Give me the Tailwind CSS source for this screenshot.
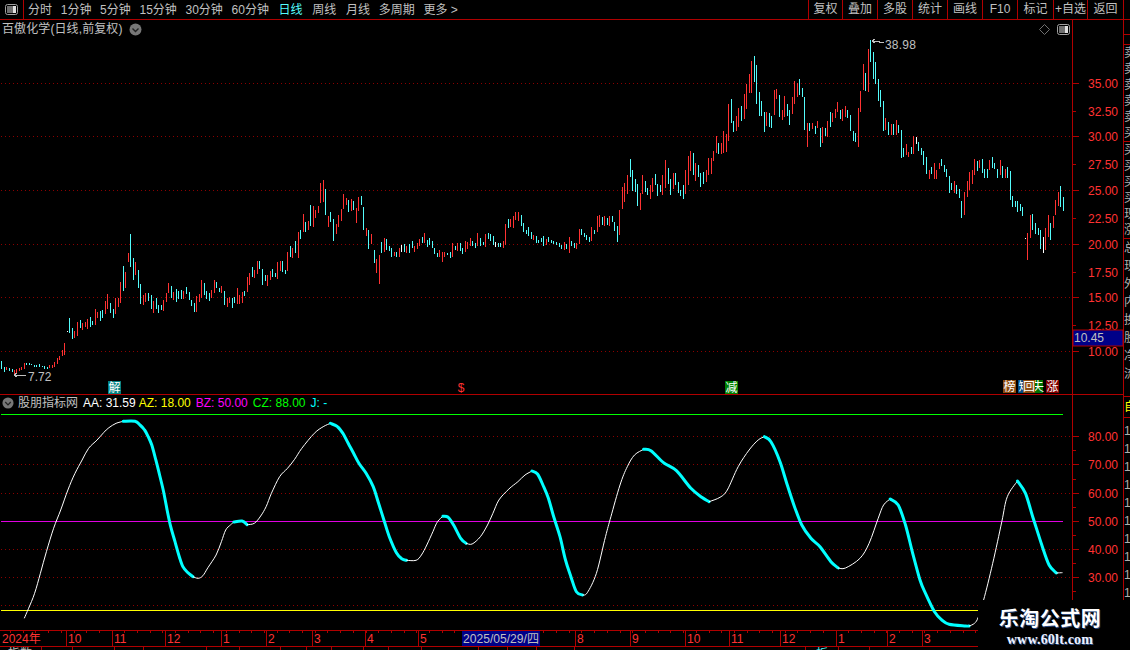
<!DOCTYPE html>
<html lang="zh">
<head>
    <meta charset="UTF-8">
    <title>百傲化学</title>
    <script src="https://cdn.jsdelivr.net/npm/@tailwindcss/browser@4"></script>
</head>
<body class="bg-black">
<div class="w-[1130px] h-[650px] relative overflow-hidden bg-black text-[#c0c0c0] text-[12px] leading-[14px] font-['Liberation_Sans','Noto_Sans_CJK_SC',sans-serif] flex flex-col">

    <!-- Top toolbar -->
    <header class="h-[20px] flex border-b border-[#b00000]">
        <div class="w-[24px] border-r border-[#b00000] flex items-center justify-center">
            <svg width="13" height="11" viewBox="0 0 13 11"><rect x="0.5" y="0.5" width="12" height="10" rx="2" fill="none" stroke="#a0a0a0"/><rect x="2" y="2" width="6" height="7" fill="#707070"/><rect x="8" y="2" width="3" height="7" fill="#e0e0e0"/></svg>
        </div>
        <nav class="flex-1 flex items-center gap-[8.7px] pl-[4px]">
            <span>分时</span><span>1分钟</span><span>5分钟</span><span>15分钟</span><span>30分钟</span><span>60分钟</span>
            <span class="text-[#54fcfc] ml-[1px]">日线</span><span class="ml-[1px]">周线</span><span class="ml-[1px]">月线</span><span>多周期</span><span>更多 &gt;</span>
        </nav>
        <div class="flex items-center text-center">
            <span class="w-[34px] h-[19px] leading-[19px] border-l border-[#b00000]">复权</span>
            <span class="w-[35px] h-[19px] leading-[19px] border-l border-[#b00000]">叠加</span>
            <span class="w-[35px] h-[19px] leading-[19px] border-l border-[#b00000]">多股</span>
            <span class="w-[35px] h-[19px] leading-[19px] border-l border-[#b00000]">统计</span>
            <span class="w-[35px] h-[19px] leading-[19px] border-l border-[#b00000]">画线</span>
            <span class="w-[35px] h-[19px] leading-[19px] border-l border-[#b00000]">F10</span>
            <span class="w-[36px] h-[19px] leading-[19px] border-l border-[#b00000]">标记</span>
            <span class="w-[34px] h-[19px] leading-[19px] border-l border-[#b00000] whitespace-nowrap">+自选</span>
            <span class="w-[37px] h-[19px] leading-[19px] border-x border-[#b00000]">返回</span>
            <span class="w-[6px]"></span>
        </div>
    </header>

    <div class="flex h-[627px]">
        <div class="w-[1123px] flex flex-col">
            <!-- Price panel -->
            <section class="h-[375px] flex border-b border-[#b00000]">
                <div class="w-[1073px] border-r border-[#b00000] flex flex-col">
                    <div class="h-[18px] flex items-center justify-between pl-[2px] pr-[2px]">
                        <div class="flex items-center gap-[6px]">
                            <span class="tracking-[0.1px]">百傲化学(日线,前复权)</span>
                            <svg width="13" height="13" viewBox="0 0 13 13"><circle cx="6.5" cy="6.5" r="6" fill="#777"/><path d="M3.5 5.5 L6.5 8.5 L9.5 5.5" fill="none" stroke="#222" stroke-width="1.4"/></svg>
                        </div>
                        <div class="flex items-center gap-[7px]">
                            <svg width="11" height="11" viewBox="0 0 11 11"><path d="M5.5 0.5 L10.5 5.5 L5.5 10.5 L0.5 5.5 Z" fill="none" stroke="#707070"/></svg>
                            <svg width="13" height="11" viewBox="0 0 13 11"><rect x="0.5" y="0.5" width="12" height="10" rx="2" fill="none" stroke="#a0a0a0"/><rect x="2" y="2" width="6" height="7" fill="#707070"/><rect x="8" y="2" width="3" height="7" fill="#e0e0e0"/></svg>
                        </div>
                    </div>
                    <svg id="price" class="block" width="1072" height="356" viewBox="0 38 1072 356" shape-rendering="crispEdges"></svg>
                </div>
                <svg id="priceAxis" class="block" width="50" height="374" viewBox="1073 20 50 374"></svg>
            </section>

            <!-- Indicator panel -->
            <section class="h-[235px] flex">
                <div class="w-[1073px] border-r border-[#b00000] flex flex-col">
                    <div class="h-[14px] flex items-center pl-[2px] mt-[1px] whitespace-nowrap">
                        <svg class="mr-[4px]" width="12" height="12" viewBox="0 0 13 13"><circle cx="6.5" cy="6.5" r="6" fill="#777"/><path d="M3.5 5.5 L6.5 8.5 L9.5 5.5" fill="none" stroke="#222" stroke-width="1.4"/></svg>
                        <span class="mr-[5px]">股朋指标网</span>
                        <span class="text-white mr-[3px]">AA: 31.59</span>
                        <span class="text-[#ffff00] mr-[5px]">AZ: 18.00</span>
                        <span class="text-[#ff00ff] mr-[5px]">BZ: 50.00</span>
                        <span class="text-[#00ff00] mr-[5px]">CZ: 88.00</span>
                        <span class="text-[#00ffff]">J: -</span>
                    </div>
                    <svg id="ind" class="block" width="1072" height="220" viewBox="0 410 1072 220"></svg>
                </div>
                <svg id="indAxis" class="block" width="50" height="235" viewBox="1073 395 50 235"></svg>
            </section>

            <!-- Date axis -->
            <div class="h-[17px] border-y border-[#b00000]">
                <svg id="dates" class="block" width="1123" height="15" viewBox="0 631 1123 15" shape-rendering="crispEdges"></svg>
            </div>
        </div>

        <!-- Clipped quote column on the right -->
        <aside class="w-[7px] border-l border-[#b00000] overflow-hidden flex flex-col text-[#b0b0b0] whitespace-nowrap">
            <div class="h-[15px] border-b border-[#b00000]"></div>
            <div class="h-[10px] border-b border-[#b00000]"></div>
            <div class="h-[97px] border-b border-[#b00000] overflow-hidden leading-[16px]">卖五<br>卖四<br>卖三<br>卖二<br>卖一<br>买一</div>
            <div class="h-[97px] border-b border-[#b00000] overflow-hidden leading-[16px]">买二<br>买三<br>买四<br>买五<br>现价<br>涨跌</div>
            <div class="h-[158px] border-b border-[#b00000] overflow-hidden leading-[18px]">总量<br>现量<br>外盘<br>内盘<br>换手<br>股本<br>净资<br>流通</div>
            <div class="h-[21px] border-b border-[#b00000] text-[#ffff00] leading-[21px]">自选</div>
            <div class="flex-1 overflow-hidden pt-[4px] leading-[18px]">1<br>1<br>1<br>1<br>1<br>1<br>1<br>1<br>1<br>1<br>1<br>1</div>
        </aside>
    </div>

    <!-- Bottom status tabs, only their top shows -->
    <footer class="h-[3px] flex overflow-hidden leading-[14px]">
        <span class="w-[42px] border-r border-[#b00000] pl-[8px]">指数</span>
        <span class="w-[31px] border-r border-[#b00000]"></span>
        <span class="w-[42px] border-r border-[#b00000]"></span>
        <span class="w-[29px] border-r border-[#b00000]"></span>
        <span class="w-[63px] border-r border-[#b00000]"></span>
        <span class="w-[33px] border-r border-[#b00000]"></span>
        <span class="w-[41px] border-r border-[#b00000]"></span>
        <span class="w-[26px] border-r border-[#b00000]"></span>
        <span class="w-[25px] border-r border-[#b00000]"></span>
        <span class="w-[32px] border-r border-[#b00000]"></span>
        <span class="w-[25px] border-r border-[#b00000]"></span>
        <span class="w-[33px] border-r border-[#b00000]"></span>
        <span class="w-[57px] border-r border-[#b00000]"></span>
        <span class="w-[29px] border-r border-[#b00000]"></span>
        <span class="w-[29px] border-r border-[#b00000]"></span>
        <span class="w-[38px] border-r border-[#b00000]"></span>
        <span class="w-[231px] border-r border-[#b00000]"></span>
        <span class="w-[33px] border-r border-[#b00000] text-[#54fcfc] pl-[10px]">板块</span>
        <span class="w-[31px] border-r border-[#b00000]"></span>
    </footer>

    <!-- Watermark over the lower right corner -->
    <div class="absolute left-[978px] top-[600px] w-[152px] h-[50px] bg-black flex flex-col items-center pr-[8px]">
        <div class="text-[20px] leading-[24px] mt-[7px] font-bold text-white tracking-[0.5px] whitespace-nowrap [text-shadow:1px_1px_0_#2a4a80]">乐淘公式网</div>
        <div class="text-[14px] leading-[16px] mt-[1px] font-bold text-[#eef2ff] tracking-[0.2px] whitespace-nowrap font-['Liberation_Serif',serif] [text-shadow:1px_1px_0_#2a4a80]">www.60lt.com</div>
    </div>
</div>

<script>
    const RED = "#ff3232", CYAN = "#54fcfc", GRID = "#8c0000", FRAME = "#b00000", GRAY = "#c0c0c0";

    // bars read off the reference: x, top, bottom, colour (in crop units)
    const barSets = [
        [0, 170, "4,573,597,c 13,590,605,c 19,592,600,r 28,594,602,c 36,598,606,c 43,600,612,r 49,597,610,r 58,595,603,r 65,591,600,r 73,580,597,r 80,579,586,c 88,580,585,c 95,582,586,c 102,584,591,c 109,585,591,c 118,582,591,c 127,588,591,c 133,588,597,c 142,591,597,c 148,586,594,r 157,585,593,r 163,576,591,r 172,564,582,r 178,558,570,r 187,540,558,r 193,519,555,r 201,484,486,w 208,445,490,c 217,474,506,c 223,484,505,r 232,456,498,r 241,451,474,c 247,460,480,r 256,456,472,r 263,447,477,r 271,441,471,c 277,453,466,c 286,418,465,r 292,426,444,r 301,423,453,c 307,420,444,c 316,393,432,r 322,372,417,r 331,399,429,c 340,417,444,c 346,384,432,r 355,383,411,r 361,336,399,r 370,289,363,c 376,306,354,r 385,249,276,r 391,192,291,c 400,264,330,c 406,276,315,r 415,300,354,c 421,342,402,c 430,375,405,r 436,369,396,r 445,369,393,c 454,375,417,c 460,393,429,r 469,384,417,c 475,405,429,c 484,405,420,c 490,390,423,r 499,369,396,r 505,339,369,r 514,348,384,c 520,366,390,r 529,357,396,c 535,363,387,c 544,360,387,c 550,363,387,r 559,351,372,c 568,366,390,c 574,390,408,c 583,399,426,c 589,378,426,r 598,372,396,r 604,330,384,r 613,339,375,c 619,363,387,c 628,369,393,c 634,360,384,r 643,330,369,r 649,336,354,c 658,354,366,c 664,348,369,r 673,363,405,c 682,384,411,r 688,381,399,r 697,384,414,c 703,381,399,c 712,354,402,r 718,375,402,r 727,366,399,r 733,363,378,c 742,321,366,r 748,309,345,r 757,291,321,c 763,300,324,r 772,273,312,r 778,273,297,c 787,297,345,c 796,315,333,c 802,315,348,r 811,303,330,r 817,297,321,c 826,309,321,c 832,276,327,r 841,273,303,r 847,273,306,c 856,300,312,c 862,246,303,r 871,228,261,c 877,234,264,r 886,213,249,c 895,186,264,r"],
        [300, 170, "1,180,207,c 10,132,186,r 16,156,186,c 25,153,180,r 31,105,168,c 40,108,171,r 46,120,144,r 55,108,129,r 61,39,99,r 70,30,96,r 76,57,135,c 85,138,171,r 91,126,156,c 100,147,213,c 109,162,192,r 115,135,171,r 124,117,153,r 130,72,117,r 139,84,105,r 145,90,126,c 154,87,123,r 160,93,120,c 169,114,159,r 175,81,123,r 184,78,105,c 190,111,180,c 199,174,198,r 205,180,237,c 214,192,222,r 223,240,279,c 229,267,309,r 238,255,342,r 244,216,249,c 253,204,246,r 259,207,240,c 268,228,243,c 274,234,261,c 283,246,258,r 289,246,261,c 298,234,261,r 304,225,246,w 313,222,246,c 319,228,249,r 328,222,249,c 337,213,234,c 343,228,246,r 352,219,237,r 358,207,228,r 367,201,219,c 373,189,219,r 382,210,231,c 388,204,225,c 397,213,234,c 403,234,252,c 412,249,261,c 418,240,261,r 427,246,276,r 433,246,261,r 442,249,255,c 451,246,264,c 457,219,261,r 466,228,240,c 472,219,243,r 481,219,243,c 487,234,252,c 496,213,246,r 502,216,237,r 511,204,228,r 517,213,228,c 526,219,234,c 532,189,228,r 541,204,228,c 550,216,225,c 556,192,231,r 565,189,207,c 571,192,213,c 580,198,225,c 586,216,231,w 595,219,231,c 601,219,231,c 610,213,234,r 616,162,225,r 625,147,174,c 631,147,171,r 640,138,174,r 646,126,150,r 655,126,153,r 664,135,168,c 670,159,186,c 679,180,192,c 685,171,198,c 694,186,207,c 700,195,210,r 709,198,219,c 715,210,219,c 724,204,216,c 730,198,228,c 739,207,225,r 745,201,216,c 754,210,219,c 760,213,222,c 769,216,225,c 778,219,231,c 784,225,237,c 793,216,240,r 799,222,237,c 808,201,249,r 814,213,228,c 823,219,234,c 829,219,237,r 838,177,222,r 844,177,195,c 853,189,201,c 859,195,210,c 868,201,216,c 874,171,213,r 883,180,192,c 892,138,186,r 898,135,171,r 907,141,165,c 913,138,168,r 922,144,165,c 928,138,168,r 937,138,156,c 943,156,183,c 952,168,216,c 958,120,195,r 967,51,117,r 973,39,96,r 982,15,72,r 991,-33,21,c 997,0,63,c 1006,27,66,c 1012,42,108,c"],
        [600, 50, "121,429,480,r 127,375,432,r 136,393,426,c 142,414,435,c 151,405,447,r 157,384,426,r 166,372,405,c 172,402,438,c 181,405,426,c 187,375,435,r 196,330,414,r 205,354,402,c 211,387,435,c 220,369,417,r 226,369,405,c 235,396,429,c 241,420,438,c 250,405,447,c 256,360,432,r 265,318,405,r 271,303,363,r 280,309,375,c 286,339,393,r 295,345,381,c 301,369,411,c 310,366,402,c 319,360,396,r 325,324,375,r 334,324,372,r 340,303,333,r 349,258,309,r 355,279,312,c 364,279,312,r 370,243,309,r 379,252,306,r 385,162,273,r 394,147,219,c 400,213,246,c 409,198,243,r 415,174,231,r 424,168,213,c 433,132,207,r 439,102,177,r 448,72,129,r 454,33,129,r 463,18,96,c 469,45,162,c 478,126,198,c 484,153,198,c 493,186,246,c 499,186,228,r 508,189,231,c 514,198,234,c 523,120,195,r 529,117,147,r 538,135,201,c 547,180,210,r 553,138,201,r 562,162,198,c 568,180,225,c 577,141,192,r 583,93,162,r 592,99,141,r 598,87,135,c 607,114,141,c 613,141,240,c 622,219,291,r 628,219,243,c 637,219,237,r 646,228,252,c 652,213,234,r 661,234,291,c 667,231,279,r 676,234,258,c 682,213,261,r 691,186,231,c 697,189,216,r 706,177,204,r 712,156,186,r 721,180,207,c 727,177,213,r 736,168,201,r 742,180,204,c 751,195,243,c 760,243,273,c 766,249,276,c 775,174,291,r 781,123,186,r 790,42,120,r 796,69,123,c 805,-3,126,r 811,-30,36,c 820,6,87,c 826,36,102,c 835,87,153,c"],
        [880, 90, "1,0,51,c 10,33,123,c 16,84,120,r 25,96,135,c 34,102,135,r 40,102,135,c 49,90,135,r 55,105,129,c 64,120,204,c 70,174,201,c 79,162,195,r 85,186,201,r 94,171,192,c 100,138,192,r 109,141,162,w 115,156,183,c 124,174,195,c 130,183,225,c 139,201,252,c 148,240,267,r 154,231,252,c 163,219,267,r 169,240,267,r 178,219,237,r 184,207,228,c 193,225,246,c 199,237,261,c 208,258,309,c 214,279,300,c 223,273,309,r 229,285,312,c 238,297,324,c 244,333,384,c 253,306,375,r 262,273,321,r 268,246,300,r 277,240,282,r 283,207,255,r 292,213,243,c 298,210,234,r 307,207,249,c 313,237,264,c 322,237,264,c 328,210,240,r 337,201,234,c 343,219,237,c 352,237,264,c 361,210,255,r 367,228,264,c 376,237,264,r 382,231,264,c 391,243,330,c 397,318,351,c 406,333,351,c 412,333,366,c 421,342,363,c 427,351,378,c 436,444,447,w 442,429,510,r 451,375,444,r 457,372,420,c 466,399,432,c 475,414,435,c 481,420,477,c 490,441,489,w 496,414,480,r 505,375,441,r 511,399,450,c 520,378,414,r 526,330,375,r 535,306,348,r 541,288,351,c 550,321,363,c"]
    ];

    function badge(x, y, w, bg, ch) {
        return `<rect x="${x}" y="${y}" width="${w}" height="13" fill="${bg}"/><text x="${x + w / 2}" y="${y + 11}" text-anchor="middle" font-size="12" fill="#fff" shape-rendering="auto">${ch}</text>`;
    }

    // dotted grid line, drawn as single pixels so the dots stay apart
    function grid(y, out) {
        for (let x = 1; x < 1072; x += 4) out.push(`<rect x="${x}" y="${Math.floor(y)}" width="1" height="1" fill="${GRID}"/>`);
    }

    // Price chart
    const priceGrid = [];
    [83.5, 136.5, 190.5, 244.5, 297.5, 351.5].forEach(y => grid(y, priceGrid));
    let p = priceGrid.join("");
    const colours = { r: RED, c: CYAN, w: "#ffffff" };
    barSets.forEach(([ox, oy, text]) => {
        text.split(" ").forEach(item => {
            const [x, t, b, c] = item.split(",");
            const top = Math.round(oy + t / 3), bot = Math.round(oy + b / 3);
            p += `<rect x="${Math.floor(ox + x / 3)}" y="${top}" width="1" height="${Math.max(1, bot - top)}" fill="${colours[c]}"/>`;
        });
    });
    p += `<path d="M872 41 L875 39 M872 41 L875 43 M872 41 L878 41 L881 43 L884 42" fill="none" stroke="${GRAY}"/>`;
    p += `<text x="885" y="49" font-size="12" fill="${GRAY}" letter-spacing=".2" shape-rendering="auto">38.98</text>`;
    p += `<path d="M14 375 L26 375 M14 375 L17 373 M14 375 L17 377" fill="none" stroke="${GRAY}"/>`;
    p += `<text x="28" y="381" font-size="12" fill="${GRAY}" shape-rendering="auto">7.72</text>`;
    p += badge(108, 381, 13, "#008080", "解");
    p += `<text x="461" y="392" text-anchor="middle" font-size="12" fill="#ff3232" shape-rendering="auto">$</text>`;
    p += badge(725, 381, 13, "#008000", "减");
    p += badge(1003, 380, 13, "#8b4a10", "榜");
    p += badge(1018, 380, 13, "#004a80", "短");
    p += badge(1033, 380, 10, "#007000", "失");
    p += badge(1023, 380, 12, "#8b4a10", "回");
    p += badge(1046, 380, 13, "#800000", "涨");
    document.getElementById("price").innerHTML = p;

    // Axis with ticks and labels
    function axis(rows, minor, digitsY) {
        let s = "";
        rows.forEach(([y, label, long]) => {
            s += `<line x1="1073" x2="${long ? 1079 : 1076}" y1="${y}" y2="${y}" stroke="${FRAME}"/>`;
            s += `<text x="1088" y="${y + digitsY}" font-size="12" fill="${RED}">${label}</text>`;
        });
        minor.forEach(y => { s += `<line x1="1073" x2="1076" y1="${y}" y2="${y}" stroke="${FRAME}"/>`; });
        return s;
    }
    let pa = axis([[83.5, "35.00", 1], [111.5, "32.50", 0], [136.5, "30.00", 1], [164.5, "27.50", 0], [190.5, "25.00", 1], [218.5, "22.50", 0], [244.5, "20.00", 1], [272.5, "17.50", 0], [297.5, "15.00", 1], [325.5, "12.50", 0], [351.5, "10.00", 1]], [], 4.5);
    pa += `<rect x="1073" y="330" width="50" height="16" fill="#000088" stroke="${FRAME}"/><text x="1074" y="342" font-size="12" fill="${GRAY}">10.45</text>`;
    document.getElementById("priceAxis").innerHTML = pa;

    document.getElementById("indAxis").innerHTML = axis([[436.5, "80.00", 1], [464.5, "70.00", 1], [493.5, "60.00", 1], [521.5, "50.00", 1], [549.5, "40.00", 1], [577.5, "30.00", 1]], [450.5, 479.5, 507.5, 535.5, 563.5, 591.5], 4.5);

    // Indicator: thin white while rising, thick cyan while falling
    const a = (x, y) => [x / 2.8, 410 + y / 3];
    const b = (x, y) => [560 + x / 2.75, 410 + y / 3];
    const segs = [
        ["w", a, [68,625,80,595,97,550,113,490,130,425,150,355,170,300,190,240,210,190,230,150,248,115,272,90,290,68,305,53,325,40,345,34]],
        ["c", a, [345,34,378,34,392,45,405,60,415,80,425,105,435,145,447,195,458,245,468,300,478,350,490,395,502,440,512,470,525,487,540,500]],
        ["w", a, [540,500,555,505,568,497,582,473,605,435,620,395,632,360,645,345,655,336]],
        ["c", a, [655,336,678,333,692,344]],
        ["w", a, [692,344,712,340,730,318,745,290,760,250,783,200,805,175,825,148,845,115,880,70,905,50,925,40]],
        ["c", a, [925,40,945,50,960,70,975,100,990,130,1005,160,1025,190,1045,230,1060,280,1075,330,1090,380,1110,428,1125,446,1138,451]],
        ["w", a, [1138,451,1165,451,1180,435,1195,405,1212,365,1225,335,1240,319]],
        ["c", a, [1240,319,1255,322,1270,345,1290,385,1305,400]],
        ["w", a, [1305,400,1322,402,1345,380,1365,345,1380,310,1397,270,1425,237,1450,215,1470,195,1490,183]],
        ["c", b, [-77,183,-62,192,-47,225,-32,265,-16,325,0,380,15,450,30,500,45,545,62,555]],
        ["w", b, [62,555,75,548,100,490,125,380,140,320,165,225,185,170,205,135,230,118]],
        ["c", b, [230,118,250,122,285,158,320,182,360,235,390,262,410,275]],
        ["w", b, [410,275,440,262,460,240,490,170,520,120,545,90,562,80]],
        ["c", b, [562,80,580,95,605,155,625,225,645,290,665,345,690,385,715,410,745,455,765,474]],
        ["w", b, [765,474,785,474,825,445,850,400,875,325,890,285,908,267]],
        ["c", b, [908,267,930,285,950,345,970,430,990,510,1005,550,1030,605,1050,630,1070,643,1115,648,1125,648]],
        ["w", b, [1125,648,1140,640,1150,622,1165,570,1190,460,1215,335,1230,260,1258,213]],
        ["c", b, [1258,213,1280,250,1300,320,1325,405,1345,465,1365,489]],
        ["w", b, [1365,489,1382,488]]
    ];
    function smooth(pts) {
        let d = `M${pts[0][0].toFixed(1)} ${pts[0][1].toFixed(1)}`;
        for (let i = 0; i < pts.length - 1; i++) {
            const p0 = pts[Math.max(0, i - 1)], p1 = pts[i], p2 = pts[i + 1], p3 = pts[Math.min(pts.length - 1, i + 2)];
            const c1 = [p1[0] + (p2[0] - p0[0]) / 6, p1[1] + (p2[1] - p0[1]) / 6];
            const c2 = [p2[0] - (p3[0] - p1[0]) / 6, p2[1] - (p3[1] - p1[1]) / 6];
            d += `C${c1[0].toFixed(1)} ${c1[1].toFixed(1)} ${c2[0].toFixed(1)} ${c2[1].toFixed(1)} ${p2[0].toFixed(1)} ${p2[1].toFixed(1)}`;
        }
        return d;
    }
    const indGrid = [];
    [436.5, 464.5, 493.5, 549.5, 577.5, 605.5].forEach(y => grid(y, indGrid));
    let s = indGrid.join("");
    s += `<line x1="1" x2="1063" y1="414.5" y2="414.5" stroke="#00ff00" shape-rendering="crispEdges"/>`;
    s += `<line x1="1" x2="1063" y1="521.5" y2="521.5" stroke="#e000e0" shape-rendering="crispEdges"/>`;
    s += `<line x1="1" x2="1063" y1="610.5" y2="610.5" stroke="#ffff00" shape-rendering="crispEdges"/>`;
    segs.forEach(([kind, map, flat]) => {
        const pts = [];
        for (let i = 0; i < flat.length; i += 2) pts.push(map(flat[i], flat[i + 1]));
        s += kind === "c"
            ? `<path d="${smooth(pts)}" fill="none" stroke="#00ffff" stroke-width="3" stroke-linecap="round"/>`
            : `<path d="${smooth(pts)}" fill="none" stroke="#ffffff" stroke-width="1"/>`;
    });
    document.getElementById("ind").innerHTML = s;

    // Date axis
    let d = "";
    for (let x = 10; x < 1000; x += 12.7) d += `<rect x="${Math.round(x)}" y="631" width="1" height="2" fill="${FRAME}"/>`;
    [[66, "10"], [112, "11"], [165, "12"], [221, "1"], [266, "2"], [312, "3"], [365, "4"], [418, "5"], [575, "8"], [630, "9"], [685, "10"], [729, "11"], [780, "12"], [836, "1"], [887, "2"], [922, "3"]].forEach(([x, label]) => {
        d += `<rect x="${x}" y="631" width="1" height="15" fill="${FRAME}"/>`;
        d += `<text x="${x + 2}" y="643" font-size="12" fill="${RED}" shape-rendering="auto">${label}</text>`;
    });
    d += `<text x="2" y="643" font-size="12" fill="${RED}" shape-rendering="auto">2024年</text>`;
    d += `<rect x="462" y="631" width="78" height="15" fill="#000088"/>`;
    d += `<text x="463" y="643" font-size="12" fill="${GRAY}" textLength="76" lengthAdjust="spacingAndGlyphs" shape-rendering="auto">2025/05/29/四</text>`;
    document.getElementById("dates").innerHTML = d;
</script>
</body>
</html>
